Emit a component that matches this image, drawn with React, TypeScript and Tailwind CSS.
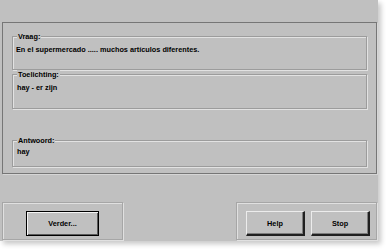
import type { ReactNode } from 'react'

// Old Windows-style quiz dialog: question, hint and answer group boxes,
// with the navigation buttons underneath.

function GroupBox({ label, className, children }: { label: string; className: string; children?: ReactNode }) {
  return (
    <div
      className={`relative border border-[#9c9c9c] shadow-[inset_1px_1px_0_#e2e2e2,1px_1px_0_#e2e2e2] ${className}`}
    >
      <span className="absolute -top-[5px] left-[4px] bg-[#c0c0c0] px-px leading-[9px]">{label}</span>
      {children}
    </div>
  )
}

function Button({ label, isDefault, className }: { label: string; isDefault?: boolean; className: string }) {
  return (
    <button
      type="button"
      className={`flex items-center justify-center bg-[#c0c0c0] text-black ${
        isDefault
          ? 'border border-black shadow-[inset_1px_1px_0_#f4f4f4,inset_-1px_-1px_0_#5a5a5a]'
          : 'border-t border-l border-t-[#ececec] border-l-[#ececec] border-r-2 border-b-2 border-r-[#202020] border-b-[#202020] shadow-[inset_-1px_-1px_0_#7c7c7c]'
      } ${className}`}
    >
      {label}
    </button>
  )
}

export default function App() {
  return (
    <div className="w-[388px] h-[251px] bg-white font-['Liberation_Sans',Arial,sans-serif] font-bold text-[7.3px] leading-[9px] text-black">
      <div className="w-[378px] h-[241px] bg-[#c0c0c0] shadow-[3px_3px_5px_rgba(0,0,0,0.22)] pt-[22px] pl-[2px] pr-px flex flex-col">
        <div className="w-[375px] h-[152px] border border-[#767676] shadow-[1px_1px_0_#d6d6d6] pl-[9px] pr-[9px] pt-[13px] flex flex-col">
          <GroupBox label="Vraag:" className="h-[34px] pl-[3px] pt-[8px]">
            En el supermercado ..... muchos artículos diferentes.
          </GroupBox>
          <GroupBox label="Toelichting:" className="mt-[4px] h-[35px] pl-[4px] pt-[8px]">
            hay - er zijn
          </GroupBox>
          <GroupBox label="Antwoord:" className="mt-[31px] h-[27px] pl-[4px] pt-[6px]">
            hay
          </GroupBox>
        </div>

        <div className="mt-[28px] flex">
          <div className="w-[121px] h-[38px] border border-[#a6a6a6] shadow-[inset_1px_1px_0_#e0e0e0,1px_1px_0_#e0e0e0] pl-[23px] pt-[8px]">
            <Button label="Verder..." isDefault className="w-[73px] h-[25px]" />
          </div>
          <div className="ml-auto w-[141px] h-[38px] border border-[#a6a6a6] shadow-[inset_1px_1px_0_#e0e0e0,1px_1px_0_#e0e0e0] pl-[9px] pt-[8px] flex gap-[6px]">
            <Button label="Help" className="w-[59px] h-[25px]" />
            <Button label="Stop" className="w-[59px] h-[25px]" />
          </div>
        </div>
      </div>
    </div>
  )
}
